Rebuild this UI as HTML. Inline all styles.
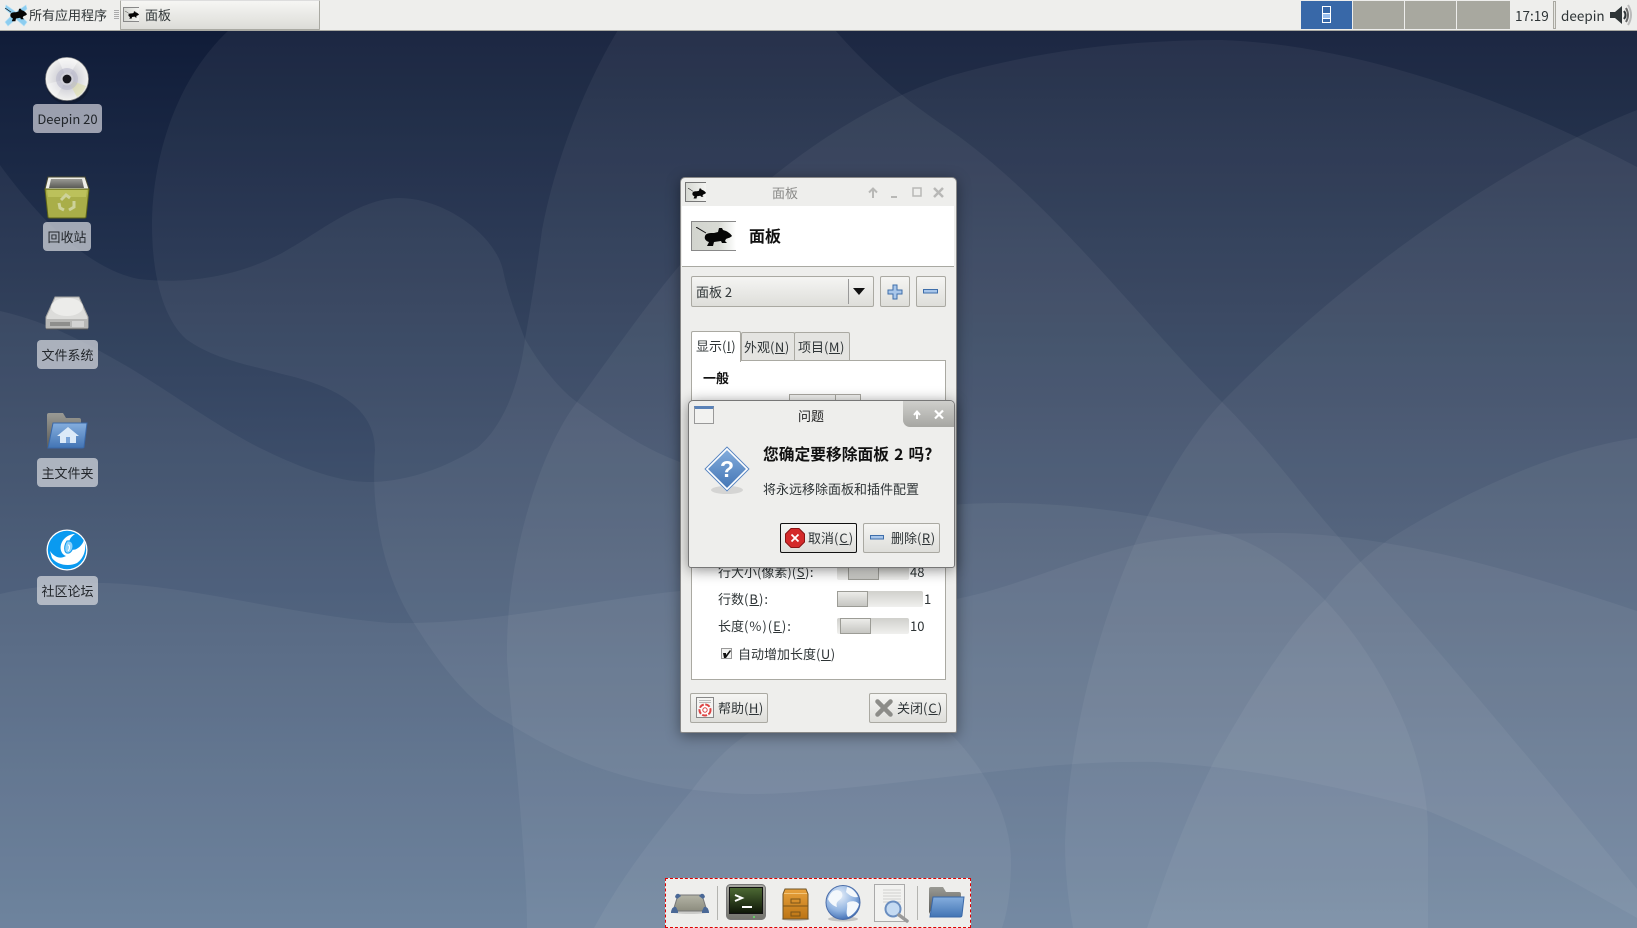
<!DOCTYPE html>
<html lang="zh"><head><meta charset="utf-8"><title>Deepin</title>
<style>
*{box-sizing:border-box}
html,body{margin:0;padding:0;width:1637px;height:928px;overflow:hidden;background:#1a2a48}
body{position:relative;font:13px/1 "Noto Sans CJK SC","Liberation Sans",sans-serif;color:#2e3436}
.a{position:absolute}
.t{position:absolute;white-space:nowrap;font-size:13px;line-height:18px;height:18px}
.l{letter-spacing:.5px}.c{letter-spacing:1px}
.lbl{position:absolute;height:29px;border-radius:4px;background:rgba(214,216,222,.72);color:#22262b;text-align:center;line-height:30px;font-size:13px}
.btn{position:absolute;border:1px solid #aaa9a2;border-radius:2px;background:linear-gradient(#f5f5f3,#dededa)}
.pg{position:absolute;top:1px;height:28px;background:#a8a89f}
.tr{position:absolute;height:16px;background:linear-gradient(#d0d0cc,#f0f0ee);border-radius:2px}
.th{position:absolute;height:16px;border:1px solid #9c9c96;background:linear-gradient(#ecece9,#c6c6c2)}
svg{position:absolute;overflow:visible}
u{text-decoration:underline;text-underline-offset:1px}
</style></head><body>

<svg class="a" style="left:0;top:0" width="1637" height="928" viewBox="0 0 1637 928">
<defs>
<linearGradient id="bg" x1="0" y1="30" x2="0" y2="928" gradientUnits="userSpaceOnUse"><stop offset="0" stop-color="#101c38"/><stop offset="1" stop-color="#57708f"/></linearGradient>
<symbol id="m" viewBox="0 0 36 20" preserveAspectRatio="none"><path d="M0 0L10 6" stroke="#111" stroke-width="1" fill="none"/><path d="M9 9C10 6 14 6 18 6L22 5L23 1L26 1L27 3L30 4C32 5 35 7 36 9C34 11 32 11 30 12L29 14L31 16L26 16L25 14L18 15L17 19L11 19L13 15C10 14 8 12 9 9Z" fill="#060606"/></symbol>
<linearGradient id="bf" x1="0" y1="0" x2="0" y2="1"><stop offset="0" stop-color="#85aede"/><stop offset="1" stop-color="#4274b4"/></linearGradient>
<linearGradient id="gr" x1="0" y1="0" x2="0" y2="1"><stop offset="0" stop-color="#9a9a94"/><stop offset="1" stop-color="#5a5a56"/></linearGradient>
<radialGradient id="dsc" cx=".5" cy=".5" r=".5"><stop offset="0" stop-color="#a9a9bc"/><stop offset=".45" stop-color="#d4d4da"/><stop offset="1" stop-color="#f2f2f0"/></radialGradient>
<radialGradient id="gl" cx=".4" cy=".3" r=".75"><stop offset="0" stop-color="#e8f0fa"/><stop offset=".6" stop-color="#8fb2e0"/><stop offset="1" stop-color="#3a68b0"/></radialGradient>
<linearGradient id="or" x1="0" y1="0" x2="0" y2="1"><stop offset="0" stop-color="#e8a13c"/><stop offset="1" stop-color="#bc7414"/></linearGradient>
<linearGradient id="sc" x1="0" y1="0" x2="0" y2="1"><stop offset="0" stop-color="#4d6a34"/><stop offset="1" stop-color="#0e1608"/></linearGradient>
<linearGradient id="bz" x1="0" y1="0" x2="0" y2="1"><stop offset="0" stop-color="#a8a8a2"/><stop offset="1" stop-color="#74746e"/></linearGradient>
<linearGradient id="tn" x1="0" y1="0" x2="0" y2="1"><stop offset="0" stop-color="#b4b4a6"/><stop offset="1" stop-color="#8c8c7e"/></linearGradient>
</defs>
<rect width="1637" height="928" fill="url(#bg)"/>
<g fill="#fff" fill-opacity=".052">
<path d="M229 30C175 80 152 160 152 225C152 280 165 320 186 339C215 360 250 365 282 374C330 385 375 405 375 450C372 490 375 560 412 620C440 665 470 705 508 723C570 762 640 790 745 794C800 795 900 782 990 772C1050 765 1100 761 1156 762C1260 768 1350 790 1423 809C1500 840 1570 880 1637 918L1637 30Z"/>
<path d="M0 165C40 220 90 270 139 279C190 285 240 275 282 253C320 232 360 198 399 198C445 198 495 235 503 270C507 290 512 305 525 339C540 365 560 390 577 402C610 425 640 447 680 462C770 500 860 510 950 505C1040 498 1140 510 1226 534C1270 548 1300 575 1325 600C1390 670 1428 760 1428 832L1428 928L0 928Z"/>
<path d="M0 311C50 322 90 345 130 368C170 392 215 425 260 448C295 465 335 482 369 482C410 482 450 465 477 448C505 425 520 380 525 339C532 300 538 260 542 230C555 160 585 85 618 30L835 30C870 70 905 100 950 130C1050 200 1140 320 1222 402C1270 450 1305 500 1336 534C1430 640 1540 770 1637 889L1637 928L0 928Z"/>
<path d="M0 594C30 587 65 583 104 583C190 585 290 615 390 623C490 625 590 600 680 591C770 590 860 615 950 600C1010 590 1070 560 1134 545C1180 535 1230 533 1283 533C1400 535 1530 575 1637 611L1637 928L0 928Z"/>
<path d="M527 928C527 860 512 729 507 660C505 560 540 450 577 402C615 350 650 300 680 265C760 175 860 105 950 76C1040 50 1130 40 1222 40C1360 45 1510 100 1637 167L1637 928Z"/>
<path d="M1637 110C1577 133 1400 220 1222 402C1140 490 1070 680 1065 843C1065 880 1070 910 1073 928L1637 928Z"/>
<path d="M1637 438C1550 450 1450 500 1388 540C1360 560 1340 580 1325 600C1280 640 1220 750 1213 763C1180 830 1160 890 1147 928L1637 928Z"/>
<path d="M594 928C620 880 650 840 692 790C710 765 730 745 749 733C800 700 850 692 880 695C940 700 1011 790 1011 860C1011 890 1008 910 1002 928Z"/>
</g>
</svg>

<!-- desktop icons -->
<svg style="left:44px;top:56px" width="46" height="48" viewBox="0 0 46 48"><ellipse cx="24" cy="27" rx="22" ry="21" fill="#000" opacity=".18"/><circle cx="23" cy="23" r="21.500" fill="url(#dsc)" stroke="#8a8a8a" stroke-width=".7"/><path d="M23 23L14 3A21 21 0 0 1 34 5Z" fill="#fff" opacity=".45"/><path d="M23 23L42 30A21 21 0 0 1 33 41Z" fill="#dcdca8" opacity=".6"/><path d="M23 23L3 28A21 21 0 0 0 12 41Z" fill="#fff" opacity=".35"/><circle cx="23" cy="23" r="11" fill="#b9b9cb" opacity=".6"/><circle cx="23" cy="23" r="6.500" fill="#d0d0d8"/><circle cx="23" cy="23" r="4.400" fill="#16161c"/></svg>
<div class="lbl" style="left:33px;top:104px;width:69px;background:rgba(200,202,212,.75)">Deepin 20</div>

<svg style="left:44px;top:175px" width="46" height="44" viewBox="0 0 46 44"><path d="M4 2H41L45 14H1Z" fill="#efefe8" stroke="#4a4a30"/><path d="M7 4H38L40 13H5Z" fill="url(#gr)"/><path d="M1 14H45L42 42Q42 43 40 43H6Q4 43 4 42Z" fill="#a9ae48" stroke="#5e6418"/><path d="M3 15H43L42 22H4Z" fill="#c0c560" opacity=".8"/><g fill="none" stroke="#cdd29a" stroke-width="3"><path d="M17 25L22 20L26 23"/><path d="M30 26L30 32L25 35"/><path d="M20 35L16 33L15 28"/></g></svg>
<div class="lbl" style="left:43px;top:222px;width:48px">回收站</div>

<svg style="left:45px;top:296px" width="44" height="36" viewBox="0 0 44 36"><path d="M10 1H34L43 21V31Q43 33 41 33H3Q1 33 1 31V21Z" fill="#dcdcda" stroke="#a4a4a2"/><ellipse cx="22" cy="11" rx="16" ry="9" fill="#ececea"/><path d="M1 23H43V31Q43 33 41 33H3Q1 33 1 31Z" fill="#b8b8b6"/><rect x="5" y="26" width="20" height="4" fill="#8e8e8c"/><path d="M28 25v6M30 25v6M32 25v6M34 25v6M36 25v6M38 25v6" stroke="#eee" stroke-width="1"/><path d="M1 33H43" stroke="#555" stroke-width="1"/></svg>
<div class="lbl" style="left:37px;top:340px;width:61px">文件系统</div>

<svg style="left:46px;top:412px" width="42" height="40" viewBox="0 0 42 40"><path d="M1 36V3Q1 1 3 1H17L20 6H33Q35 6 35 8V12H12Z" fill="url(#gr)"/><path d="M7 11H41L38 35Q38 36 36 36H2Z" fill="url(#bf)" stroke="#3a68a8"/><path d="M22 15L33 24H30V31H14V24H11Z" fill="#dceaf8"/><rect x="20" y="25" width="4" height="6" fill="#7aa4d8"/></svg>
<div class="lbl" style="left:37px;top:458px;width:61px">主文件夹</div>

<svg style="left:46px;top:529px" width="42" height="42" viewBox="0 0 42 42"><circle cx="21" cy="21" r="20.500" fill="#fff"/><circle cx="21" cy="21" r="19.200" fill="#0a9af0"/><path d="M4 22C9 29 15 30 20 27C15 25 13 19 16 13C18 9 23 5 29 5C24 8 22 13 23 17C24 21 28 22 32 19C35 17 37 14 38 11C41 20 38 29 31 34C23 38 11 36 6 29Z" fill="#fff"/><path d="M21 12C27 11 28 17 26 21C24 25 20 25 19 22C18 18 19 15 21 12Z" fill="#8ed2fa" stroke="#0a9af0"/><path d="M22 16C24 16 24 20 22 22" fill="none" stroke="#fff"/></svg>
<div class="lbl" style="left:37px;top:576px;width:61px">社区论坛</div>

<!-- top panel -->
<div class="a" style="left:0;top:0;width:1637px;height:31px;background:#eeeeec;border-bottom:1px solid #a9a9a2"></div>
<svg style="left:4px;top:3px" width="24" height="24" viewBox="0 0 24 24"><path d="M2 2L12 9L22 2L23 6L16 12L23 19L20 23L12 16L4 23L1 19L8 12L1 6Z" fill="#8ccdf0" stroke="#b4e0f6" stroke-width=".6"/><use href="#m" x="1" y="5" width="22" height="14"/></svg>
<div class="t" style="left:29px;top:6px">所有应用程序</div>
<div class="a" style="left:114px;top:10px;width:5px;height:10px;background:repeating-linear-gradient(#aaa 0,#aaa 1px,#eee 1px,#eee 2px)"></div>
<div class="a" style="left:120px;top:0;width:200px;height:30px;border:1px solid #a9a9a2;border-top-color:#ddd;border-radius:1px;background:linear-gradient(#f6f6f4,#dcdcd8)"></div>
<div class="a" style="left:123px;top:7px;width:16px;height:15px;border:1px solid #888;border-right:0;background:linear-gradient(90deg,#d6d8d2,#f4f4f2)"></div>
<svg style="left:125px;top:11px" width="14" height="8"><use href="#m" width="14" height="8"/></svg>
<div class="t" style="left:145px;top:6px">面板</div>

<div class="a" style="left:1301px;top:1px;width:51px;height:28px;background:#3868a8"></div>
<div class="a" style="left:1322px;top:6px;width:9px;height:17px;border:1px solid #fff;background:#3868a8"></div>
<div class="a" style="left:1323px;top:13px;width:7px;height:6px;background:#9cc0ee;border-top:1px solid #fff;border-bottom:1px solid #fff"></div>
<div class="pg" style="left:1353px;width:51px"></div>
<div class="pg" style="left:1405px;width:51px"></div>
<div class="pg" style="left:1457px;width:53px"></div>
<div class="t" style="left:1515px;top:6px;font-size:13.500px">17:19</div>
<div class="a" style="left:1553px;top:1px;width:3px;height:28px;border:1px solid #aaa9a2;background:#e6e6e2"></div>
<div class="t" style="left:1561px;top:6px;font-size:13.500px">deepin</div>
<svg style="left:1610px;top:4px" width="25" height="22" viewBox="0 0 25 22"><path d="M0 8H5L12 2V20L5 14H0Z" fill="#2e3436"/><path d="M14 7Q17 11 14 15" fill="none" stroke="#2e3436" stroke-width="2"/><path d="M16 4Q20 11 16 18" fill="none" stroke="#666" stroke-width="2"/><path d="M18 1Q24 11 18 21" fill="none" stroke="#bbb" stroke-width="2"/></svg>

<!-- panel preferences window -->
<div class="a" style="left:680px;top:177px;width:277px;height:556px;background:#eeeeec;border:1px solid #888;border-radius:5px 5px 2px 2px;box-shadow:0 3px 14px rgba(0,0,0,.4)"></div>
<div class="a" style="left:685px;top:182px;width:21px;height:20px;border:1px solid #777;border-right:0;background:linear-gradient(90deg,#d6d8d2,#f4f4f2)"></div>
<svg style="left:688px;top:188px" width="18" height="11"><use href="#m" width="18" height="11"/></svg>
<div class="t" style="left:772px;top:184px;color:#8a8a88">面板</div>
<svg style="left:866px;top:186px" width="82" height="14" viewBox="0 0 82 14" fill="none" stroke="#b8b8b6" stroke-width="2"><path d="M7 12V3M3 6.500L7 2.500L11 6.500"/><path d="M25 11H31"/><rect x="47" y="2" width="8" height="8" stroke-width="1.500"/><path d="M68 2L77 11M77 2L68 11" stroke-width="2.500"/></svg>
<div class="a" style="left:682px;top:206px;width:272px;height:60px;background:#fff"></div>
<div class="a" style="left:682px;top:266px;width:272px;height:1px;background:#a9a9a2"></div>
<div class="a" style="left:691px;top:221px;width:45px;height:30px;border:1px solid #888;border-right:0;background:linear-gradient(90deg,#d2d4ce,#d8dad4 60%,#fff)"></div>
<svg style="left:696px;top:227px" width="36" height="20"><use href="#m" width="36" height="20"/></svg>
<div class="t" style="left:749px;top:226px;font-size:16px;font-weight:700;color:#111">面板</div>

<div class="btn" style="left:691px;top:276px;width:183px;height:31px"></div>
<div class="a" style="left:848px;top:279px;width:1px;height:25px;background:#999"></div>
<div class="a" style="left:853px;top:288px;width:0;height:0;border:6px solid transparent;border-top:7px solid #111;border-bottom:0"></div>
<div class="t" style="left:696px;top:283px">面板 2</div>
<div class="btn" style="left:880px;top:276px;width:30px;height:31px"></div>
<svg style="left:887px;top:284px" width="16" height="16"><path d="M6 1H10V6H15V10H10V15H6V10H1V6H6Z" fill="#a8c6ea" stroke="#3e6eaa"/></svg>
<div class="btn" style="left:916px;top:276px;width:30px;height:31px"></div>
<svg style="left:923px;top:289px" width="16" height="6"><rect x=".5" y=".5" width="14" height="3.500" fill="#a8c6ea" stroke="#3e6eaa"/></svg>

<div class="a" style="left:691px;top:360px;width:255px;height:320px;background:#fff;border:1px solid #aaa9a2"></div>
<div class="a" style="left:741px;top:332px;width:54px;height:29px;background:#e4e4e1;border:1px solid #aaa9a2;border-radius:2px 2px 0 0"></div>
<div class="a" style="left:794px;top:332px;width:56px;height:29px;background:#e4e4e1;border:1px solid #aaa9a2;border-radius:2px 2px 0 0"></div>
<div class="a" style="left:691px;top:331px;width:50px;height:31px;background:#fff;border:1px solid #aaa9a2;border-bottom:0;border-radius:2px 2px 0 0"></div>
<div class="t" style="left:696px;top:337px">显示<span class="l">(<u>I</u>)</span></div>
<div class="t" style="left:744px;top:338px">外观<span class="l">(<u>N</u>)</span></div>
<div class="t" style="left:798px;top:338px">项目<span class="l">(<u>M</u>)</span></div>
<div class="t" style="left:703px;top:369px;font-weight:700;color:#111">一般</div>
<div class="a" style="left:789px;top:394px;width:72px;height:14px;border:1px solid #aaa9a2;background:#f4f4f2"></div>
<div class="a" style="left:835px;top:395px;width:1px;height:12px;background:#aaa9a2"></div>

<div class="t" style="left:718px;top:563px">行大小(像素)<span class="l">(<u>S</u>):</span></div>
<div class="tr" style="left:837px;top:564px;width:72px"></div>
<div class="th" style="left:848px;top:564px;width:31px"></div>
<div class="t" style="left:910px;top:563px">48</div>
<div class="t" style="left:718px;top:590px">行数<span class="c">(<u>B</u>):</span></div>
<div class="tr" style="left:837px;top:591px;width:86px"></div>
<div class="th" style="left:837px;top:591px;width:31px"></div>
<div class="t" style="left:924px;top:590px">1</div>
<div class="t" style="left:718px;top:617px">长度<span class="c">(%)(<u>E</u>):</span></div>
<div class="tr" style="left:837px;top:618px;width:72px"></div>
<div class="th" style="left:840px;top:618px;width:31px"></div>
<div class="t" style="left:910px;top:617px">10</div>
<div class="a" style="left:721px;top:648px;width:11px;height:11px;border:1px solid #999;background:#f4f4f2"></div>
<svg style="left:723px;top:650px" width="8" height="8"><path d="M0 3L3 3L3 5L7 0L8 1L3 8L1 8Z" fill="#111"/></svg>
<div class="t" style="left:738px;top:645px">自动增加长度<span class="l">(<u>U</u>)</span></div>

<div class="btn" style="left:690px;top:693px;width:78px;height:30px"></div>
<svg style="left:696px;top:697px" width="18" height="21" viewBox="0 0 18 21"><rect x=".5" y=".5" width="17" height="20" fill="#f4f4f2" stroke="#888"/><path d="M3 3.500H15M3 5.500H15" stroke="#bbb"/><circle cx="9" cy="13" r="5.500" fill="#fff" stroke="#d44" stroke-width="2" stroke-dasharray="5 1.500"/><circle cx="9" cy="13" r="2.200" fill="#fff" stroke="#d44"/></svg>
<div class="t" style="left:718px;top:699px">帮助<span class="l">(<u>H</u>)</span></div>
<div class="btn" style="left:869px;top:693px;width:78px;height:30px"></div>
<svg style="left:875px;top:699px" width="18" height="18"><path d="M2.500 2.500L15.500 15.500M15.500 2.500L2.500 15.500" stroke="#8c8c88" stroke-width="4.500" stroke-linecap="round"/></svg>
<div class="t" style="left:897px;top:699px">关闭<span class="c">(<u>C</u>)</span></div>

<!-- dialog -->
<div class="a" style="left:688px;top:400px;width:267px;height:168px;background:#eeeeec;border:1px solid #777;border-radius:5px 5px 3px 3px;box-shadow:0 2px 14px rgba(0,0,0,.45)"></div>
<div class="a" style="left:903px;top:401px;width:51px;height:26px;background:linear-gradient(#cfcfcc,#a6a6a2);border-radius:0 4px 0 7px"></div>
<svg style="left:911px;top:408px" width="38" height="14" viewBox="0 0 38 14" fill="none" stroke="#fff" stroke-width="2"><path d="M6 11V4M3 7L6 3.500L9 7"/><path d="M24 2.500L32 10.500M32 2.500L24 10.500" stroke-width="2.200"/></svg>
<div class="a" style="left:694px;top:406px;width:20px;height:18px;border:1px solid #999;border-top:3px solid #5a82b8;background:#f2f2f0"></div>
<div class="t" style="left:798px;top:407px;color:#222">问题</div>
<svg style="left:704px;top:446px" width="46" height="50" viewBox="0 0 46 50"><ellipse cx="23" cy="44" rx="16" ry="4" fill="#999" opacity=".3"/><path d="M23 2L44 23L23 44L2 23Z" fill="url(#bf)" stroke="#fff" stroke-width="3" stroke-linejoin="round"/><path d="M23 1L45 23L23 45L1 23Z" fill="none" stroke="#5a86c0" stroke-linejoin="round"/><text x="23" y="31" font-family="Liberation Sans,sans-serif" font-size="23" font-weight="700" fill="#fff" text-anchor="middle">?</text></svg>
<div class="t" style="left:763px;top:445px;font-size:15.750px;font-weight:700;color:#111;word-spacing:1.500px">您确定要移除面板 2 吗?</div>
<div class="t" style="left:763px;top:480px">将永远移除面板和插件配置</div>
<div class="btn" style="left:780px;top:523px;width:77px;height:30px;border-color:#111"></div>
<svg style="left:785px;top:528px" width="20" height="20"><path d="M6 0.500H14L19.500 6V14L14 19.500H6L0.500 14V6Z" fill="#d42a2a" stroke="#8a1414"/><path d="M6.500 6.500L13.500 13.500M13.500 6.500L6.500 13.500" stroke="#fff" stroke-width="1.800"/></svg>
<div class="t" style="left:808px;top:529px">取消<span class="c">(<u>C</u>)</span></div>
<div class="btn" style="left:863px;top:523px;width:77px;height:30px"></div>
<svg style="left:870px;top:535px" width="16" height="6"><rect x=".5" y=".5" width="13" height="3.500" fill="#a8c6ea" stroke="#3e6eaa"/></svg>
<div class="t" style="left:891px;top:529px">删除<span class="l">(<u>R</u>)</span></div>

<!-- dock -->
<div class="a" style="left:665px;top:878px;width:306px;height:50px;background:#eeeeec;border:1px dashed #e00000"></div>
<div class="a" style="left:717px;top:886px;width:1px;height:34px;background:#b4b4b0"></div>
<div class="a" style="left:917px;top:886px;width:1px;height:34px;background:#b4b4b0"></div>
<svg style="left:671px;top:893px" width="38" height="21" viewBox="0 0 38 21"><ellipse cx="19" cy="19" rx="19" ry="2" fill="#999" opacity=".4"/><path d="M7 2H31L36 18H2Z" fill="url(#tn)" stroke="#777"/><path d="M4 4Q5 0 8 1L10 3L6 6Z" fill="#4a6896"/><path d="M34 4Q33 0 30 1L28 3L32 6Z" fill="#4a6896"/><path d="M0 19Q1 13 5 14L7 18V20H0Z" fill="#4a6896"/><path d="M38 19Q37 13 33 14L31 18V20H38Z" fill="#4a6896"/></svg>
<svg style="left:726px;top:884px" width="40" height="37" viewBox="0 0 40 37"><rect x=".5" y=".5" width="39" height="35" rx="4" fill="url(#bz)" stroke="#777"/><rect x="3.500" y="3.500" width="33" height="26" fill="url(#sc)" stroke="#111"/><path d="M9 11L16 14L9 17" fill="none" stroke="#fff" stroke-width="2"/><path d="M16 23H26" stroke="#fff" stroke-width="2"/><rect x="27" y="32" width="2" height="2" fill="#6c6"/></svg>
<svg style="left:782px;top:888px" width="27" height="33" viewBox="0 0 27 33"><ellipse cx="13.500" cy="31" rx="14" ry="2" fill="#999" opacity=".5"/><path d="M3 1H24L26 6V31H1V6Z" fill="url(#or)" stroke="#6e5428"/><path d="M2 5.500H25" stroke="#f2c478"/><path d="M1 18H26" stroke="#7a5418"/><rect x="9" y="11" width="9" height="4" fill="none" stroke="#7a5418"/><rect x="9" y="24" width="9" height="4" fill="none" stroke="#7a5418"/></svg>
<svg style="left:825px;top:885px" width="36" height="37" viewBox="0 0 36 37"><ellipse cx="18" cy="34" rx="15" ry="2.500" fill="#999" opacity=".5"/><circle cx="18" cy="17.500" r="17" fill="url(#gl)" stroke="#4a6ca8"/><path d="M7 7C12 3 19 6 17 12C15 16 10 16 12 22C8 21 4 17 3 14C4 11 5 9 7 7Z" fill="#f4f8fc"/><path d="M22 2C27 3 31 7 33 12C28 13 24 10 21 7Z" fill="#f4f8fc"/><path d="M22 18C26 15 32 16 34 19C33 25 27 31 23 32C20 28 23 24 22 18Z" fill="#f4f8fc"/></svg>
<svg style="left:874px;top:884px" width="37" height="40" viewBox="0 0 37 40"><rect x=".5" y=".5" width="30" height="37" fill="#f2f2f0" stroke="#aaa"/><path d="M9 6H27M9 9H27M9 12H27M9 15H27M9 18H27" stroke="#d0d0ce"/><circle cx="19" cy="25" r="7.500" fill="#c4daf2" stroke="#6a8ec0" stroke-width="2"/><path d="M25 31L33 37" stroke="#999" stroke-width="3.500" stroke-linecap="round"/></svg>
<svg style="left:928px;top:886px" width="37" height="32" viewBox="0 0 37 32"><path d="M1 28V3Q1 1 3 1H15L18 6H31Q33 6 33 8V14H8Z" fill="url(#gr)"/><path d="M5 11H36L34 29Q34 31 32 31H2Z" fill="url(#bf)" stroke="#3a68a8"/></svg>
</body></html>
